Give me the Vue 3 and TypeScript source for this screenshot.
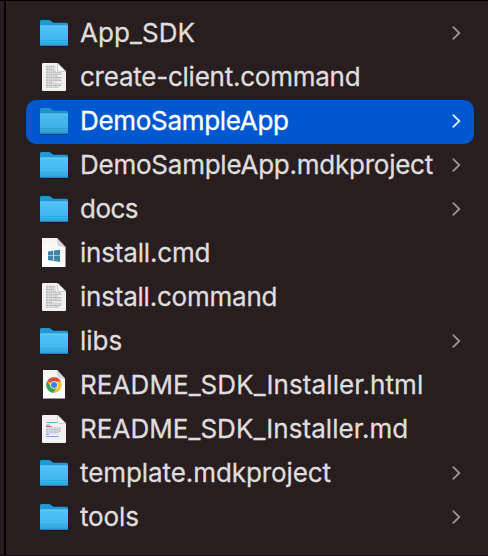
<script setup lang="ts">
type Kind = 'folder' | 'text' | 'windows' | 'chrome' | 'markdown'

interface Entry {
  name: string
  kind: Kind
  tracking: number
  selected?: boolean
}

const entries: Entry[] = [
  { name: 'App_SDK', kind: 'folder', tracking: 0.08 },
  { name: 'create-client.command', kind: 'text', tracking: -0.24 },
  { name: 'DemoSampleApp', kind: 'folder', tracking: -0.3, selected: true },
  { name: 'DemoSampleApp.mdkproject', kind: 'folder', tracking: -0.24 },
  { name: 'docs', kind: 'folder', tracking: -0.5 },
  { name: 'install.cmd', kind: 'windows', tracking: -0.18 },
  { name: 'install.command', kind: 'text', tracking: -0.22 },
  { name: 'libs', kind: 'folder', tracking: 0 },
  { name: 'README_SDK_Installer.html', kind: 'chrome', tracking: 0.08 },
  { name: 'README_SDK_Installer.md', kind: 'markdown', tracking: 0.05 },
  { name: 'template.mdkproject', kind: 'folder', tracking: -0.08 },
  { name: 'tools', kind: 'folder', tracking: -0.15 },
]

// Ragged line lengths of the page preview in a document icon
const lines = [8, 8.5, 7, 9, 14, 15, 11, 15, 13.5, 15, 6, 15, 14, 12]
</script>

<template>
  <main class="pane">
    <svg class="defs" width="0" height="0" aria-hidden="true">
      <defs>
        <linearGradient id="folder-front" x1="0" y1="0" x2="0" y2="1">
          <stop offset="0" stop-color="#50c3f7" />
          <stop offset="0.65" stop-color="#43b9f0" />
          <stop offset="1" stop-color="#2fa8df" />
        </linearGradient>
        <linearGradient id="paper" x1="0" y1="0" x2="0" y2="1">
          <stop offset="0" stop-color="#f4f4f3" />
          <stop offset="1" stop-color="#fff" />
        </linearGradient>
      </defs>
    </svg>
    <ul class="list">
      <li v-for="e in entries" :key="e.name" class="row" :class="{ selected: e.selected }">
        <svg class="icon" viewBox="0 0 28 32">
          <g v-if="e.kind === 'folder'" class="folder">
            <path d="M.5 28h27" stroke="#0b0708" stroke-opacity=".5" stroke-width="1.4" />
            <path d="M0 3.5Q0 2 1.5 2H8.5Q10 2 11 3L12.5 4.2Q13.2 4.7 14.2 4.7H26.5Q28 4.7 28 6.2V26H0Z" fill="#1f9ad2" />
            <path d="M0 8.2Q0 7.6.6 7.6H27.4Q28 7.6 28 8.2V26.2Q28 27.7 26.5 27.7H1.5Q0 27.7 0 26.2Z" fill="url(#folder-front)" />
            <path d="M.3 8.1H27.7" stroke="#79d6ff" stroke-width=".7" />
            <path d="M0 22.5H28M0 24.8H28" stroke="#2a9fd6" stroke-width=".6" />
            <path d="M.6 27.2H27.4" stroke="#1f8dc0" stroke-width="1" />
          </g>
          <template v-else-if="e.kind === 'windows'">
            <path d="M2 0H17L25.5 9V29H2Z" fill="url(#paper)" />
            <path d="M16.5 0Q18.2 3.5 17.5 8Q22 7.5 25.5 10.5V9L17 0Z" fill="#d2d2d2" />
            <path d="M8 13.5L13.2 12.8V17.4H8ZM13.9 12.6L20 11.7V17.4H13.9ZM8 18.1H13.2V22.9L8 22.1ZM13.9 18.1H20V23.9L13.9 23Z" fill="#3c87a8" />
          </template>
          <template v-else-if="e.kind === 'chrome'">
            <path d="M3 0H17L25 8.5V28.5H3Z" fill="url(#paper)" />
            <path d="M16.5 0Q18 3.5 17.5 7.5Q21.5 7 25 10V8.5L17 0Z" fill="#d6d6d6" />
            <circle cx="14" cy="15" r="7.8" fill="#efc43e" />
            <path d="M14 15L7.3 11.1A7.8 7.8 0 0 1 20.9 11.5H14Z" fill="#d94b3e" />
            <path d="M7.3 11.1A7.8 7.8 0 0 0 13.3 22.8L17 17L11 17Z" fill="#35a254" />
            <circle cx="14" cy="15" r="3.8" fill="#f3f4f4" />
            <circle cx="14" cy="15" r="3" fill="#447de2" />
          </template>
          <template v-else>
            <path d="M3 1H17.5L26 9.5V28Q26 29 25 29H3Q2 29 2 28V2Q2 1 3 1Z" fill="#f1f1f0" />
            <g v-if="e.kind === 'text'" stroke="#a0a0a0" stroke-width=".8" stroke-dasharray="2.3 .35 1.5 .25">
              <path v-for="(w, i) in lines" :key="i" :d="`M6 ${4.3 + i * 1.6}h${w + 1}`" />
            </g>
            <g v-else stroke-width=".9" fill="none">
              <path d="M6 8.5H17.5" stroke="#48b7b0" />
              <path d="M6 11.1H9.5M6 12.5H12" stroke="#d84f9a" />
              <path d="M6 14H21M6 15.6H20M6 17.2H21M6 18.8H19" stroke="#a5a7bb" stroke-dasharray="2.2 .4" />
              <path d="M6 20.4H9" stroke="#a579d6" />
              <path d="M6 22.5H10M14 22.5H18.5" stroke="#54b6bd" />
              <path d="M10 22.5H14" stroke="#7d8bd0" />
            </g>
            <path d="M17.5 1L26 9.5H19Q17.5 9.5 17.5 8Z" fill="#fafafa" stroke="#a8a8a8" stroke-width=".5" />
          </template>
        </svg>
        <span class="name" :style="{ letterSpacing: e.tracking + 'px' }">{{ e.name }}</span>
        <svg v-if="e.kind === 'folder'" class="chevron" viewBox="0 0 9 14">
          <path d="M1.3 1.1L7.3 7L1.3 12.9" />
        </svg>
      </li>
    </ul>
  </main>
</template>

<style>
body {
  margin: 0;
  background: #281e1f;
}
</style>

<style scoped>
.pane {
  box-sizing: border-box;
  height: 556px;
  width: 488px;
  overflow: hidden;
  background: linear-gradient(90deg, #281e1f 4px, #000 4px, #000 6px, #281e1f 6px);
  border-top: 1px solid #000;
  border-bottom: 1px solid #1b0d15;
}
.defs {
  display: block;
}
.list {
  list-style: none;
  margin: 0;
  padding: 11px 14px 0 26px;
}
.row {
  box-sizing: border-box;
  display: flex;
  align-items: center;
  height: 44px;
  padding: 0 13px 0 14px;
  border-radius: 10px;
  color: #dfdddd;
  font: 26px/42px Inter, sans-serif;
}
.selected {
  background: #0058d0;
  color: #fff;
}
.icon {
  flex: none;
  width: 28px;
  height: 32px;
}
.selected .folder {
  filter: brightness(0.96);
}
.name {
  flex: 1;
  margin-left: 12px;
  padding-bottom: 2px;
  white-space: nowrap;
  -webkit-text-stroke: 0.3px currentColor;
}
.chevron {
  flex: none;
  width: 9px;
  height: 14px;
  margin-top: -2px;
  fill: none;
  stroke: #989293;
  stroke-width: 1.8;
  stroke-linecap: round;
  stroke-linejoin: round;
}
.selected .chevron {
  stroke: #e4edfa;
}
</style>
